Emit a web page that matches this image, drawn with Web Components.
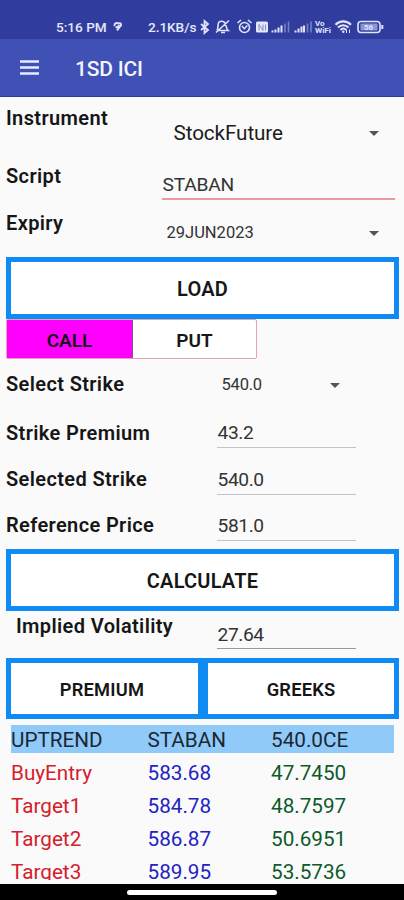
<!DOCTYPE html>
<html lang="en">
<head>
<meta charset="utf-8">
<meta name="viewport" content="width=device-width, initial-scale=1">
<title>1SD ICI</title>
<style>
html, body{
    margin: 0;
    height: 100%;
}
body{
    font-family: Roboto, sans-serif;
    color: #161616;
    background: #fafafa;
    overflow: hidden;
}
</style>
</head>
<body>
<option-app></option-app>

<script>
//makes a shadow root out of a html string
const addShadow = (element, html) => {
    const template = document.createElement("template");
    template.innerHTML = html;
    element.attachShadow({mode:"open"});
    element.shadowRoot.appendChild(template.content.cloneNode(true));
};

//the android status bar
class StatusBar extends HTMLElement{
    constructor(){
        super();
        addShadow(this, `
<style>
:host{
    display: flex;
    height: 39px;
    box-sizing: border-box;
    padding: 17px 0 0 56px;
    background: #303d9e;
    color: #e4e8fb;
    font-size: 13.6px;
    font-weight: 500;
    line-height: 20px;
    white-space: nowrap;
}
.time{
    width: 56px;
}
.speed{
    margin-left: 25px;
    width: 51px;
    letter-spacing: -.05px;
}
svg{
    display: block;
    fill: none;
    stroke: #dfe4fa;
    stroke-width: 1.6;
}
.text{
    stroke: none;
    fill: #dfe4fa;
    font-weight: 700;
}
</style>
<span class="time">5:16 PM</span>
<svg width="11" height="20" viewBox="0 0 11 20"><path d="M2.500 9C2 6 5 5.500 6.500 6.500C9 5.500 10 8 8 9.500L5 13.500M3.500 10C6 10.500 7 9.500 6.500 8" stroke-width="2"/></svg>
<span class="speed">2.1KB/s</span>
<svg width="186" height="20" viewBox="199 17 186 20">
<!-- bluetooth -->
<path d="M201 24l7 6-3.500 3v-12l3.500 3-7 6" stroke-width="1.800"/>
<!-- muted bell -->
<path d="M217 30.500h11c-2-1.500-1.500-7-4-8.500-1-1-4-1-5 0-1.500 1.500-.5 6-2 8.500M221 32.500h4M216 32.500l13-12"/>
<!-- alarm -->
<circle cx="244.500" cy="27.500" r="5"/>
<path d="M241.800 26l2.500 2.700 3-3.200M237.500 23l3.500-3M251.500 23l-3.500-3"/>
<!-- nfc -->
<rect x="256" y="21.500" width="12" height="11" rx="1.500" fill="#e4e8fb" stroke="none"/>
<path d="M259 30.500v-6l4 6v-6M265.500 24.500v6" stroke="#7f8acb" stroke-width="1"/>
<!-- signals -->
<path d="M272.500 32.500v-2M275.500 32.500v-3M278.500 32.500v-5M281.500 32.500v-7" stroke-width="2"/>
<path d="M285 32.500v-9M288.500 32.500v-11" opacity=".4"/>
<path d="M295.500 32.500v-2M298.500 32.500v-4M301.500 32.500v-6M304 32.500v-7" stroke-width="2"/>
<path d="M307.500 32.500v-9M311 32.500v-11" opacity=".4"/>
<text class="text" x="315" y="26" font-size="8">Vo</text>
<text class="text" x="315" y="33.300" font-size="8" textLength="16" lengthAdjust="spacingAndGlyphs">WiFi</text>
<!-- wifi -->
<path d="M335.500 24.800c4.500-4.500 11-4.500 15.500 0M338 27.500c3-3 7.500-3 10.500 0M340.500 30c2-2 4-2 5.500 0" stroke-width="2.200"/>
<circle cx="343.300" cy="31.700" r="1.200" fill="#dfe4fa" stroke="none"/>
<path d="M346.500 29.500v3.500M349.500 29.500v3.500" stroke-width="1"/>
<!-- battery -->
<rect x="358" y="21.500" width="22" height="11" rx="3"/>
<rect x="360.500" y="23.500" width="17" height="7" rx="1" fill="#8c96d4" stroke="none"/>
<path d="M382.300 25v4" stroke-width="2"/>
<text class="text" x="364" y="30" font-size="8">56</text>
</svg>
`);
    }
}
customElements.define("status-bar", StatusBar);

//the bar with the menu button and the title
class AppBar extends HTMLElement{
    constructor(){
        super();
        addShadow(this, `
<style>
:host{
    display: flex;
    align-items: center;
    height: 58px;
    box-sizing: border-box;
    padding: 3px 0 0 20px;
    border-bottom: 1.500px solid #283c9c;
    background: #3f51b5;
    color: #f3f4fd;
    font-size: 21px;
    font-weight: 500;
    letter-spacing: -.2px;
}
svg{
    margin: -3px 36px 0 0;
}
</style>
<svg width="19" height="15" viewBox="0 0 19 15"><path d="M0 1.500h19M0 7.500h19M0 13.500h19" stroke="#e8ebfb" stroke-width="2.500"/></svg>
<slot></slot>
`);
    }
}
customElements.define("app-bar", AppBar);

//label on the left and a field on the right, --label-top and --field-top push them down
class FormRow extends HTMLElement{
    constructor(){
        super();
        addShadow(this, `
<style>
:host{
    display: grid;
    grid-template-columns: var(--label-width, 211px) 1fr;
    padding-left: 6px;
    align-items: start;
    box-sizing: border-box;
    line-height: 24px;
    white-space: nowrap;
}
.label{
    padding-top: var(--label-top);
    font-size: 20px;
    font-weight: 600;
    letter-spacing: .37px;
}
.field{
    padding-top: var(--field-top);
}
</style>
<div class="label"><slot name="label"></slot></div>
<div class="field"><slot></slot></div>
`);
    }
}
customElements.define("form-row", FormRow);

//text with a line under it
class TextField extends HTMLElement{
    constructor(){
        super();
        addShadow(this, `
<style>
:host{
    display: block;
    width: 139px;
    height: 27px;
    box-sizing: border-box;
    padding-left: .5px;
    border-bottom: 1px solid #c4c4c4;
    font-size: 19.2px;
    letter-spacing: -.4px;
    color: #333;
}
</style>
<slot></slot>
`);
    }
}
customElements.define("text-field", TextField);

//spinner with the small arrow
class DropDown extends HTMLElement{
    constructor(){
        super();
        addShadow(this, `
<style>
:host{
    display: flex;
    justify-content: space-between;
    align-items: center;
    font-size: 16.5px;
    color: #333;
}
i{
    border: 5px solid transparent;
    border-top-color: #555;
    border-bottom: 0;
}
</style>
<slot></slot><i></i>
`);
    }
}
customElements.define("drop-down", DropDown);

//button with the thick blue border
class BlueButton extends HTMLElement{
    constructor(){
        super();
        addShadow(this, `
<style>
:host{
    display: block;
    height: 62px;
    box-sizing: border-box;
    border: 5px solid #118bf4;
    background: #fff;
    text-align: center;
    font-size: 20px;
    font-weight: 600;
    letter-spacing: .2px;
    line-height: 54px;
}
</style>
<slot></slot>
`);
    }
}
customElements.define("blue-button", BlueButton);

//call and put switch
class CallPut extends HTMLElement{
    constructor(){
        super();
        addShadow(this, `
<style>
:host{
    display: grid;
    grid-template-columns: 126px 1fr;
    width: 251px;
    height: 40px;
    box-sizing: border-box;
    border: 1px solid #e5a3ae;
    border-radius: 2px;
    background: #fff;
    text-align: center;
    font-size: 19px;
    font-weight: 600;
    line-height: 41px;
}
.on{
    height: 38px;
    box-sizing: border-box;
    background: #ff00ff;
    border-right: 1px solid #8d4b91;
}
</style>
<span class="on">CALL</span><span>PUT</span>
`);
    }
}
customElements.define("call-put", CallPut);

//levels table
class LevelTable extends HTMLElement{
    constructor(){
        super();
        const rows = [
            ["BuyEntry", "583.68", "47.7450"],
            ["Target1", "584.78", "48.7597"],
            ["Target2", "586.87", "50.6951"],
            ["Target3", "589.95", "53.5736"]
        ];
        addShadow(this, `
<style>
:host{
    display: block;
    height: 155px;
    overflow: hidden;
    font-size: 20.7px;
}
div{
    display: grid;
    grid-template-columns: 136.500px 123.500px 1fr;
    height: 33px;
    line-height: 33px;
}
.head{
    height: 28px;
    line-height: 30px;
    margin-bottom: 4px;
    background: #90caf9;
    color: #1b2733;
}
span:nth-child(1){ color: #d3202c; }
span:nth-child(2){ color: #2222c4; }
span:nth-child(3){ color: #0d5a2c; }
.head span:nth-child(n){ color: inherit; }
</style>
<div class="head"><span>UPTREND</span><span>STABAN</span><span>540.0CE</span></div>
${rows.map(row => `<div>${row.map(cell => `<span>${cell}</span>`).join("")}</div>`).join("")}
`);
    }
}
customElements.define("level-table", LevelTable);

//gesture bar at the bottom
class NavBar extends HTMLElement{
    constructor(){
        super();
        addShadow(this, `
<style>
:host{
    display: flex;
    justify-content: center;
    align-items: center;
    height: 16px;
    margin-top: auto;
    background: #000;
}
i{
    width: 150px;
    height: 5px;
    border-radius: 3px;
    background: #fff;
}
</style>
<i></i>
`);
    }
}
customElements.define("nav-bar", NavBar);

//the whole screen
class OptionApp extends HTMLElement{
    constructor(){
        super();
        addShadow(this, `
<style>
:host{
    display: flex;
    flex-direction: column;
    height: 900px;
}
.instrument{ height: 55px; --label-width: 156px; --label-top: 9px; --field-top: 24px; }
.instrument drop-down{ font-size: 20.7px; letter-spacing: -.1px; padding: 0 25px 0 11.500px; color: #1c1c1c; }
.script{ height: 52px; --label-width: 156px; --label-top: 12px; --field-top: 21px; }
.script text-field{ width: 233px; height: 27px; letter-spacing: -.2px; border-bottom: 2px solid #ea9a9e; }
.expiry{ height: 53px; --label-width: 156px; --label-top: 7px; --field-top: 17px; }
.expiry drop-down{ padding: 0 25px 0 4.500px; }
blue-button{ flex: none; margin: 0 5px 0 6px; }
call-put{ margin: 0 0 0 6px; }
.select{ height: 50px; --label-top: 13px; --field-top: 14px; }
.select drop-down{ padding: 0 64px 0 4.500px; letter-spacing: -.2px; }
.premium{ height: 46px; --label-top: 12px; --field-top: 12px; }
.strike{ height: 46px; --label-top: 12px; --field-top: 13px; }
.price{ height: 48px; --label-top: 12px; --field-top: 13px; }
.implied{ height: 47px; padding-left: 16px; --label-width: 201px; --label-top: 3px; --field-top: 12px; }
.implied text-field{ height: 26px; border-color: #999; }
.pair{ display: grid; grid-template-columns: 197px 196px; margin: 0 5px 6px 6px; }
.pair blue-button{ margin: 0; height: 61px; font-size: 18.3px; }
.pair blue-button:first-child{ padding-right: 5px; }
level-table{ margin: 0 10px 0 11px; }
</style>
<status-bar></status-bar>
<app-bar>1SD ICI</app-bar>
<form-row class="instrument"><span slot="label">Instrument</span><drop-down>StockFuture</drop-down></form-row>
<form-row class="script"><span slot="label">Script</span><text-field>STABAN</text-field></form-row>
<form-row class="expiry"><span slot="label">Expiry</span><drop-down>29JUN2023</drop-down></form-row>
<blue-button>LOAD</blue-button>
<call-put></call-put>
<form-row class="select"><span slot="label">Select Strike</span><drop-down>540.0</drop-down></form-row>
<form-row class="premium"><span slot="label">Strike Premium</span><text-field>43.2</text-field></form-row>
<form-row class="strike"><span slot="label">Selected Strike</span><text-field>540.0</text-field></form-row>
<form-row class="price"><span slot="label">Reference Price</span><text-field>581.0</text-field></form-row>
<blue-button>CALCULATE</blue-button>
<form-row class="implied"><span slot="label">Implied Volatility</span><text-field>27.64</text-field></form-row>
<div class="pair"><blue-button>PREMIUM</blue-button><blue-button>GREEKS</blue-button></div>
<level-table></level-table>
<nav-bar></nav-bar>
`);
    }
}
customElements.define("option-app", OptionApp);
</script>
</body>
</html>
